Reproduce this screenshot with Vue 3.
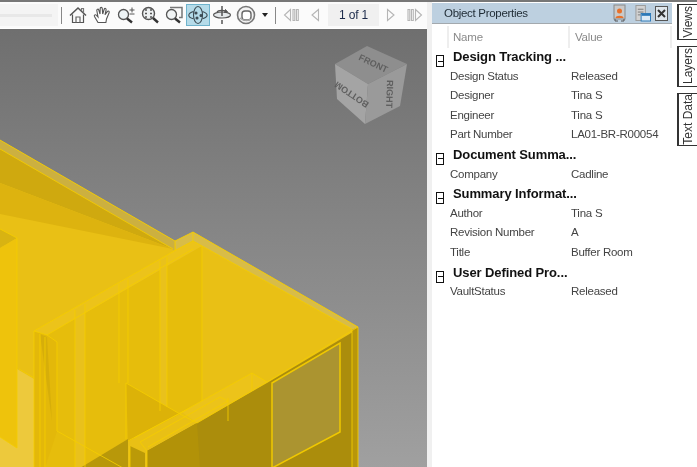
<script setup>
const rows = [
  { group: 'Design Tracking ...' },
  { name: 'Design Status', value: 'Released' },
  { name: 'Designer', value: 'Tina S' },
  { name: 'Engineer', value: 'Tina S' },
  { name: 'Part Number', value: 'LA01-BR-R00054' },
  { group: 'Document Summa...' },
  { name: 'Company', value: 'Cadline' },
  { group: 'Summary Informat...' },
  { name: 'Author', value: 'Tina S' },
  { name: 'Revision Number', value: 'A' },
  { name: 'Title', value: 'Buffer Room' },
  { group: 'User Defined Pro...' },
  { name: 'VaultStatus', value: 'Released' }
]

const tabs = ['Views', 'Layers', 'Text Data']

// long yellow edges of the model, in screen coordinates
const edges = [
  'M0 139 175 240 193 231 358 326 358 467',
  'M0 148 173 248',
  'M175 240V250',
  'M34 330 176 249 193 240 202 245 352 328',
  'M47 334 176 258 193 248',
  'M34 330 47 334 57 341 57 430 123 467',
  'M34 330V467M40 333V467M45 336V467',
  'M358 326 267 381 197 422',
  'M352 329V467',
  'M202 245V400M193 231V240',
  'M75 309V467M85 303V467M119 283V382M128 278V382M160 260V410M167 256V406',
  'M126 382 180 413 197 422',
  'M126 382V438',
  'M128 440 182 411 252 372 267 381',
  'M134 437 190 407 M140 441 220 396 228 400 148 446',
  'M140 441 147 450V467M130 445V467',
  'M252 372V390M228 397V420',
  'M17 237V447L0 436M17 237 0 228',
  'M19 368 34 377'
]
</script>

<template>
  <div class="app">
    <div class="top-strip"></div>
    <div class="body">
      <div class="left">
        <div class="toolbar">
          <div class="slider"><div class="slider-bar"></div></div>
          <div class="sep"></div>

          <button class="tool">
            <svg width="18" height="18" viewBox="0 0 18 18" fill="none" stroke="#555" stroke-width="1.2">
              <path d="M1 9.5 9 2l8 7.500" stroke-width="1.500" />
              <path d="M3.500 8.500V16.500h11V8.500" />
              <path d="M7 16.500V11h4v5.500" stroke="#666" />
              <path d="M12.500 5V2.500H14.500V7" stroke="#777" />
            </svg>
          </button>
          <button class="tool">
            <svg width="18" height="18" viewBox="0 0 18 18" fill="#fff" stroke="#555" stroke-width="1.100">
              <path d="M5 16.500 1.500 10.500c-.8-1.500 1-2.400 2-1.200L5 11 3.800 4.500c-.3-1.500 1.600-1.900 2-.4L7 8 7.200 2.600c0-1.600 2-1.600 2.100 0L9.700 8 11.200 3.300c.5-1.400 2.200-1 1.900.5L12 8.800l2.300-3.200c.9-1.200 2.500-.2 1.800 1.100L13.500 13l-.6 3.500z" />
            </svg>
          </button>
          <button class="tool">
            <svg width="18" height="18" viewBox="0 0 18 18" fill="none" stroke="#555">
              <circle cx="6.500" cy="8.500" r="5" stroke-width="1.300" fill="#eef4f6" />
              <path d="M10 12.500l5 4" stroke-width="2.400" stroke="#333" />
              <path d="M15 1.500v5M12.500 4h5M12.500 8h5" stroke-width="1" />
            </svg>
          </button>
          <button class="tool">
            <svg width="18" height="18" viewBox="0 0 18 18" fill="none" stroke="#555">
              <circle cx="7.500" cy="7.500" r="6" stroke-width="1.400" fill="#eef1f2" />
              <path d="M4 4h2M9 4h2M4 7.500h2M9 7.500h2M4 11h2M9 11h2" stroke-width="1.600" stroke="#555" />
              <path d="M12 12l5 4.500" stroke-width="2.400" stroke="#333" />
            </svg>
          </button>
          <button class="tool">
            <svg width="18" height="18" viewBox="0 0 18 18" fill="none" stroke="#555">
              <path d="M5 1.500h12v10h-3" stroke="#777" stroke-width="1.500" />
              <circle cx="6.500" cy="8.500" r="5" stroke-width="1.300" fill="#f1f4f5" />
              <path d="M10 12.500l5 4" stroke-width="2.400" stroke="#333" />
            </svg>
          </button>
          <button class="tool active">
            <svg width="20" height="20" viewBox="0 0 20 20" fill="none" stroke="#3c4a52" stroke-width="1.100">
              <ellipse cx="10" cy="10" rx="4.500" ry="8.500" />
              <path d="M5.500 6.500C2 7.500.8 9 .8 10.200s1.500 2.700 4.700 3.500" />
              <path d="M14.500 6.500c3 1 4.600 2.500 4.600 3.800s-1.500 2.600-4.600 3.400" />
              <circle cx="8" cy="8" r="1" fill="#3c4a52" />
              <circle cx="13" cy="10.500" r="1" fill="#3c4a52" />
              <circle cx="9" cy="13" r="1" fill="#3c4a52" />
            </svg>
          </button>
          <button class="tool">
            <svg width="20" height="20" viewBox="0 0 20 20" fill="none" stroke="#555">
              <path d="M10 1v4M10 15v4" stroke-width="1.500" />
              <ellipse cx="10" cy="10" rx="8.500" ry="3" fill="#e4e8ea" stroke-width="1.100" />
              <path d="M5 7c1-2 8-2.500 10 0" stroke-width="1.200" />
              <path d="M13.500 4.500l2 2.500-3 .5z" fill="#555" />
              <path d="M10 6v5" stroke-width="1.500" />
            </svg>
          </button>
          <button class="tool">
            <svg width="20" height="20" viewBox="0 0 20 20" fill="none">
              <circle cx="10" cy="10" r="8.500" stroke="#777" stroke-width="1.600" fill="#f3f3f3" />
              <rect x="6" y="6" width="9" height="9" rx="3" stroke="#666" stroke-width="1.400" fill="#fff" />
              <path d="M4 13c3 3 8 3 11 1" stroke="#aaa" stroke-width="1.500" />
            </svg>
          </button>
          <button class="caret-btn"><span class="caret"></span></button>
          <div class="sep sep-nav"></div>

          <button class="tool">
            <svg width="16" height="16" viewBox="0 0 16 16" fill="none" stroke="#b5b5b5" stroke-width="1.100">
              <path d="M7.500 2.500 1.500 8l6 5.500z" />
              <path d="M10 2.500h1.800v11H10zM13.500 2.500h1.800v11h-1.800z" />
            </svg>
          </button>
          <button class="tool">
            <svg width="16" height="16" viewBox="0 0 16 16" fill="none" stroke="#b5b5b5" stroke-width="1.100">
              <path d="M11.500 2.500 5 8l6.500 5.500z" />
            </svg>
          </button>
          <div class="page">1 of 1</div>
          <button class="tool">
            <svg width="16" height="16" viewBox="0 0 16 16" fill="none" stroke="#b5b5b5" stroke-width="1.100">
              <path d="M4.500 2.500 11 8l-6.500 5.500z" />
            </svg>
          </button>
          <button class="tool">
            <svg width="16" height="16" viewBox="0 0 16 16" fill="none" stroke="#b5b5b5" stroke-width="1.100">
              <path d="M8.500 2.500l6 5.500-6 5.500z" />
              <path d="M1 2.500h1.800v11H1zM4.500 2.500h1.800v11H4.500z" />
            </svg>
          </button>
        </div>

        <div class="viewport">
          <svg class="scene" width="427" height="439" viewBox="0 28 427 439">
            <defs>
              <linearGradient id="bg" x1="0" y1="0" x2="0" y2="1">
                <stop offset="0" stop-color="#6f6f6f" />
                <stop offset="1" stop-color="#a0a0a0" />
              </linearGradient>
            </defs>
            <rect x="0" y="28" width="427" height="439" fill="url(#bg)" />

            <!-- floor and lips -->
            <polygon points="0,139 175,240 193,231 358,326 358,467 0,467" fill="#e9c015" />
            <polygon points="0,139 175,240 175,250 0,148" fill="#ccb040" />
            <polygon points="0,148 173,248 0,182" fill="#cfa90f" />
            <polygon points="0,182 173,248 0,213" fill="#ddb30f" />
            <polygon points="193,231 358,326 352,329 202,245 193,240 176,249 175,240" fill="#d8bc48" />
            <polygon points="0,358 34,378 34,467 0,467" fill="#edc93c" />

            <!-- box on the left -->
            <polygon points="0,228 17,237 0,247" fill="#d8b312" />
            <polygon points="0,247 17,237 17,447 0,436" fill="#eec30c" />

            <!-- long wall -->
            <polygon points="34,330 176,249 193,240 202,245 202,400 180,412 80,467 34,467" fill="#e6bd0c" />
            <polygon points="34,330 47,334 57,341 57,430 45,467 34,467" fill="#e3b80a" />
            <polygon points="40,333 47,336 52,420" fill="#d6ae0a" />
            <polygon points="34,330 176,249 193,240 202,245 47,334" fill="#ecc31a" />
            <polygon points="75,309 85,303 85,467 75,467" fill="#e9c11c" />
            <polygon points="160,260 167,256 167,406 160,410" fill="#e9c11c" />

            <!-- top panel and small wall -->
            <polygon points="202,245 352,328 267,381 252,372 202,400" fill="#e9c015" />
            <polygon points="126,382 180,413 128,440" fill="#dcb208" />
            <polygon points="202,400 252,372 267,381 197,422 182,411" fill="#ecc31a" />

            <!-- dark front -->
            <polygon points="80,467 128,438 128,467" fill="#b8980a" />
            <polygon points="130,445 145,452 145,467 130,467" fill="#bb9a08" />
            <polygon points="147,450 197,422 267,382 358,328 358,467 147,467" fill="#ab8d0c" />
            <polygon points="197,422 200,467 147,467 147,450" fill="#b29208" />
            <polygon points="352,329 358,326 358,467 352,467" fill="#b8960a" />
            <polygon points="272,382 340,342 340,431 272,467" fill="#ab9430" stroke="#f0c800" stroke-width="1.500" />

            <path v-for="d in edges" :key="d" :d="d" fill="none" stroke="#f5cc00" stroke-width="1" opacity="0.85" />

            <!-- view cube -->
            <polygon points="367,45 407,63 368,83 335,63" fill="#8e8e8e" />
            <polygon points="335,63 368,83 365,123 337,98" fill="#a4a4a4" />
            <polygon points="368,83 407,63 400,105 365,123" fill="#9a9a9a" />
            <text class="cube-text" transform="translate(373 63) rotate(25)">FRONT</text>
            <text class="cube-text" transform="translate(352 93) rotate(214)">BOTTOM</text>
            <text class="cube-text" transform="translate(389 93) rotate(92)">RIGHT</text>
          </svg>
        </div>
      </div>

      <div class="splitter"></div>

      <div class="panel">
        <div class="panel-header">
          <span class="panel-title">Object Properties</span>
          <svg class="head-icon" width="13" height="18" viewBox="0 0 13 18">
            <rect x="1" y="1" width="11" height="14" fill="#c9c9c9" stroke="#888" />
            <circle cx="6.500" cy="7" r="2.500" fill="#e8702a" />
            <path d="M2.500 14c0-3 8-3 8 0z" fill="#e8702a" />
            <path d="M2 15v2h3M11 15v2H8" fill="none" stroke="#555" />
          </svg>
          <svg class="head-icon doc-icon" width="16" height="18" viewBox="0 0 17 18">
            <rect x="1" y="1" width="10" height="16" fill="#d2d2d2" stroke="#999" />
            <path d="M3 5h6M3 8h6M3 11h3" stroke="#777" />
            <rect x="6.500" y="9.500" width="10" height="8" fill="#dceaf6" stroke="#2a78b8" />
            <path d="M7 11h9" stroke="#2a78b8" stroke-width="2" />
          </svg>
          <div class="close-box">
            <svg width="9" height="9" viewBox="0 0 9 9" stroke="#333" stroke-width="2">
              <path d="M1 1l7 7M8 1 1 8" />
            </svg>
          </div>
        </div>
        <div class="col-heads">
          <span class="col col-name">Name</span>
          <span class="col col-value">Value</span>
        </div>
        <div class="grid">
          <div v-for="row in rows" :key="row.group || row.name" class="row">
            <template v-if="row.group">
              <span class="expander"></span>
              <span class="group">{{ row.group }}</span>
            </template>
            <template v-else>
              <span class="name">{{ row.name }}</span>
              <span class="value">{{ row.value }}</span>
            </template>
          </div>
        </div>
      </div>

      <div class="tabs">
        <div v-for="tab in tabs" :key="tab" class="tab" :class="'tab-' + tab.length">
          <span>{{ tab }}</span>
        </div>
      </div>
    </div>
  </div>
</template>

<style scoped>
.app {
  width: 697px;
  height: 467px;
  overflow: hidden;
  background: #fff;
  font-family: "Liberation Sans", Arial, sans-serif;
  color: #333;
  filter: blur(0.3px);
}

.top-strip {
  height: 2px;
  background: #777;
}

.body {
  display: flex;
  height: 465px;
}

.left {
  width: 427px;
  flex: none;
  display: flex;
  flex-direction: column;
}

.toolbar {
  height: 26px;
  flex: none;
  display: flex;
  align-items: center;
  background: #fbfbfb;
  border-bottom: 1px solid #fff;
  box-sizing: content-box;
}

.slider {
  width: 58px;
  height: 22px;
  background: #f4f4f4;
  display: flex;
  align-items: center;
}

.slider-bar {
  width: 52px;
  height: 3px;
  background: #e8e8e8;
}

.sep {
  width: 1px;
  height: 17px;
  margin: 0 4px 0 3px;
  background: #888;
  flex: none;
}

.sep-nav {
  margin: 0 3px 0 3px;
}

.tool,
.caret-btn {
  width: 24px;
  height: 22px;
  padding: 0;
  border: none;
  background: none;
  display: flex;
  align-items: center;
  justify-content: center;
  flex: none;
  box-sizing: border-box;
}

.tool.active {
  background: #b5dbe9;
  border: 1px solid #6fb3cc;
}

.caret-btn {
  width: 14px;
}

.caret {
  width: 0;
  height: 0;
  border-left: 3px solid transparent;
  border-right: 3px solid transparent;
  border-top: 4px solid #222;
}

.page {
  width: 51px;
  height: 22px;
  margin-left: 1px;
  line-height: 22px;
  text-align: center;
  font-size: 12px;
  letter-spacing: -0.2px;
  color: #1b2a4a;
  background: #f0f0f0;
  flex: none;
}

.viewport {
  flex: 1;
  min-height: 0;
  overflow: hidden;
}

.scene {
  display: block;
}

.cube-text {
  font-family: "Liberation Sans", Arial, sans-serif;
  font-size: 9px;
  font-weight: 700;
  text-anchor: middle;
  dominant-baseline: middle;
  fill: #5f5f5f;
}

.splitter {
  width: 5px;
  flex: none;
  background: #f0f0f0;
}

.panel {
  width: 240px;
  flex: none;
}

.panel-header {
  height: 20px;
  margin-top: 1px;
  display: flex;
  align-items: center;
  background: #bdd0e0;
  border-bottom: 1px solid #a3a9ae;
  box-sizing: content-box;
}

.panel-title {
  margin-left: 12px;
  flex: 1;
  font-size: 11.5px;
  letter-spacing: -0.3px;
  color: #1e2a33;
}

.head-icon {
  flex: none;
  margin-right: 9px;
}

.doc-icon {
  margin-right: 4px;
}

.close-box {
  width: 13px;
  height: 15px;
  margin-right: 4px;
  border: 1px solid #555;
  background: #dfe6ec;
  box-sizing: border-box;
  display: flex;
  align-items: center;
  justify-content: center;
  flex: none;
}

.col-heads {
  height: 23px;
  display: flex;
  align-items: flex-start;
  font-size: 11.5px;
  letter-spacing: -0.2px;
  color: #8a8a8a;
}

.col {
  height: 22px;
  margin-top: 2px;
  line-height: 22px;
  border-left: 2px solid #eee;
  box-sizing: border-box;
}

.col-name {
  margin-left: 15px;
  width: 121px;
  padding-left: 4px;
}

.col-value {
  width: 104px;
  padding-left: 5px;
  border-right: 2px solid #eee;
}

.row {
  height: 19.6px;
  display: flex;
  font-size: 11.5px;
  letter-spacing: -0.25px;
  line-height: 19.6px;
  white-space: nowrap;
}

.expander {
  width: 8px;
  height: 12px;
  margin: 8px 0 0 4px;
  border: 1px solid #111;
  box-sizing: border-box;
  display: flex;
  align-items: center;
  justify-content: center;
  flex: none;
}

.expander::before {
  content: "";
  width: 5px;
  height: 1px;
  background: #111;
}

.group {
  margin-left: 9px;
  font-size: 13px;
  letter-spacing: -0.1px;
  font-weight: 700;
  color: #111;
}

.name {
  width: 121px;
  margin-left: 18px;
  color: #444;
  flex: none;
}

.value {
  color: #444;
}

.tabs {
  width: 25px;
  flex: none;
  padding: 2px 0 0 5px;
  box-sizing: border-box;
  display: flex;
  flex-direction: column;
  gap: 6px;
}

.tab {
  width: 20px;
  border: 1px solid #333;
  border-left-width: 2px;
  border-right: none;
  background: #fff;
  display: flex;
  align-items: center;
  justify-content: center;
  font-size: 12px;
  color: #333;
  box-sizing: border-box;
}

.tab span {
  writing-mode: vertical-rl;
  transform: rotate(180deg);
}

.tab-5 {
  height: 36px;
}

.tab-6 {
  height: 41px;
}

.tab-9 {
  height: 53px;
}
</style>
